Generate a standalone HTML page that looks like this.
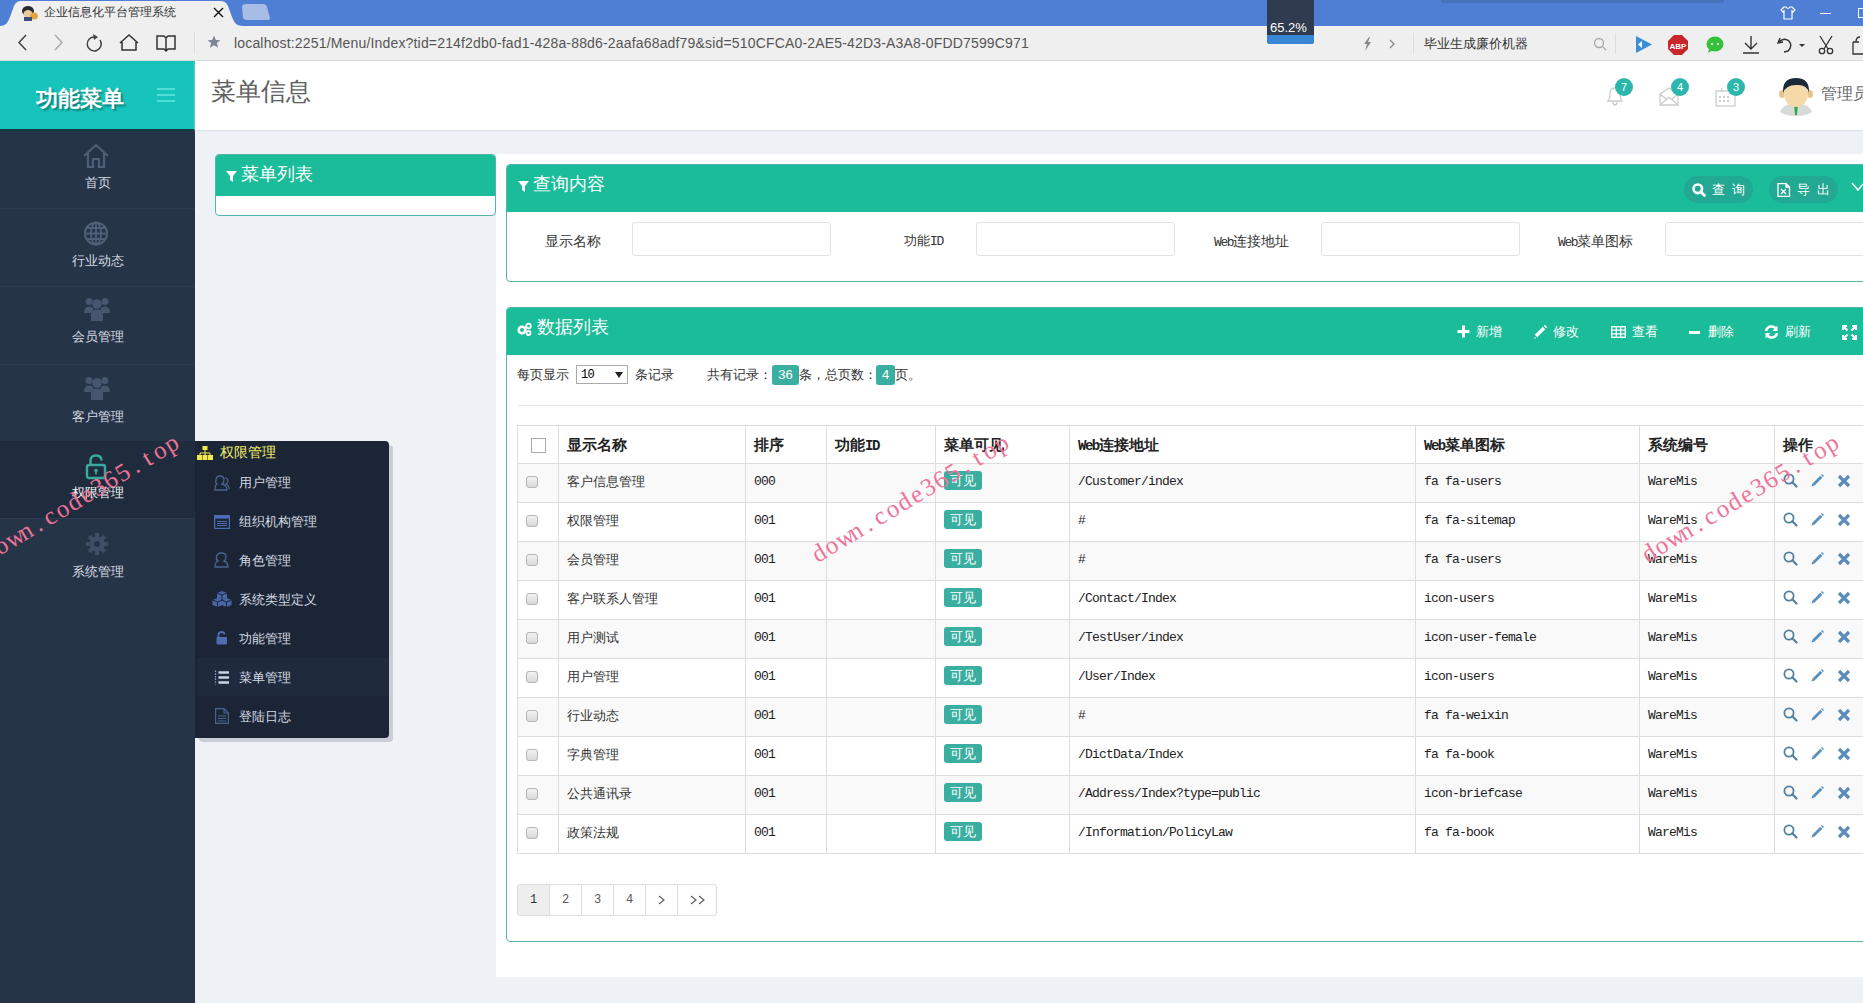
<!DOCTYPE html>
<html><head><meta charset="utf-8">
<style>
*{margin:0;padding:0;box-sizing:border-box}
html,body{width:1863px;height:1003px;overflow:hidden;background:#eef2f7;font-family:"Liberation Sans",sans-serif;position:relative}
.a{position:absolute}
/* browser chrome */
#tabbar{left:0;top:0;width:1863px;height:26px;background:#4f7fd4}
#addr{left:0;top:26px;width:1863px;height:35px;background:#efefef;border-bottom:1px solid #d9d9d9}
/* sidebar */
#side{left:0;top:61px;width:195px;height:942px;background:#253447}
#sidehead{left:0;top:0;width:195px;height:70px;background:#17c4bb;border-bottom:2px solid #0e3d47}
.si{position:absolute;left:0;width:195px;height:78px;border-bottom:1px solid #2c3c50}
.si .t{position:absolute;left:0;width:195px;text-align:center;font-size:13px;color:#d5dbe2;top:44px;line-height:16px}
.si svg{position:absolute;left:83px;top:12px}
/* header */
#head{left:195px;top:61px;width:1668px;height:69px;background:#fff;box-shadow:0 1px 2px #d8dde3}
.badge{position:absolute;width:18px;height:18px;border-radius:9px;background:#2db6ab;color:#fff;font-size:11px;line-height:18px;text-align:center}
/* panels */
.ph{position:absolute;background:#1bbc99;color:#fff}
.pb{position:absolute;border:1px solid #52b5aa;background:#fff}
.lbl{position:absolute;font-size:14px;color:#333;line-height:16px}
.inp{position:absolute;width:199px;height:34px;border:1px solid #e2e2e2;border-radius:3px;background:#fff}
.hb{position:absolute;font-size:13px;color:#fff;line-height:16px}
/* table */
table{position:absolute;left:517px;top:425px;border-collapse:collapse;font-size:13px;color:#333}
td,th{border:1px solid #ddd;height:39px;padding:0 0 0 9px;text-align:left;vertical-align:middle;white-space:nowrap}
th{font-weight:bold;font-size:15px;color:#222;height:38px}
tr.s td{background:#f9f9f9}
.m{font-family:"Liberation Mono",monospace;font-size:13px;letter-spacing:-1.2px}
.cb{display:inline-block;width:12px;height:12px;border:1px solid #aaa;border-radius:2px;background:linear-gradient(#eee,#d4d4d4);vertical-align:middle}
.vis{display:inline-block;background:#3aaea1;color:#fff;font-size:13px;line-height:18px;height:19px;padding:0 7px;border-radius:3px}
.op svg{position:absolute}
.wm{position:absolute;font-family:"Liberation Serif",serif;font-size:25px;color:#ee7399;transform-origin:0 100%;transform:rotate(-31deg);white-space:nowrap;line-height:24px}
.wm span{display:inline-block;width:14.2px;text-align:center}
.th{position:absolute;font-size:15px;font-weight:bold;color:#222;line-height:18px;white-space:nowrap}
.th .m{font-size:14px;letter-spacing:-1.5px;font-weight:bold}
.td{position:absolute;font-size:13px;color:#333;line-height:16px;white-space:nowrap}
.td.m{font-family:"Liberation Mono",monospace;letter-spacing:-0.8px;color:#222}
.cb2{position:absolute;width:12px;height:12px;border:1px solid #b5b5b5;border-radius:3px;background:linear-gradient(#f2f2f2,#d9d9d9)}
.vis2{position:absolute;width:38px;height:19px;background:#3aaea1;border-radius:3px;color:#fff;font-size:13px;line-height:19px;text-align:center}
.fl{position:absolute;font-size:13px;color:#d3d9e1;line-height:16px;white-space:nowrap}
</style></head><body>
<!-- ============ BROWSER CHROME ============ -->
<div id="tabbar" class="a"></div>
<div class="a" style="left:1441px;top:0;width:283px;height:3px;background:#4670b8;border-radius:0 0 4px 4px"></div>
<svg class="a" style="left:0;top:0" width="280" height="27">
  <path d="M0 26 C6 26 8 22 10 17 L14 6 C16 2 18 1 22 1 L219 1 C224 1 226 2 228 6 L232 17 C234 22 236 26 243 26 Z" fill="#efefef"/>
  <path d="M242 6 Q243 4 246 4 L263 4 Q266 4 267 7 L270 18 Q270 20 267 20 L247 20 Q244 20 243 18 Z" fill="#a8bde5"/>
</svg>
<!-- favicon -->
<svg class="a" style="left:21px;top:5px" width="18" height="16">
  <ellipse cx="7" cy="6" rx="6" ry="5" fill="#2a2a2a"/>
  <ellipse cx="7" cy="9" rx="4.5" ry="4" fill="#e8c9a0"/>
  <ellipse cx="13" cy="11" rx="4" ry="3.5" fill="#e3a640"/>
  <rect x="3" y="12" width="8" height="4" fill="#3d4f7a"/>
</svg>
<div class="a" style="left:44px;top:4px;font-size:12px;color:#333;line-height:17px">企业信息化平台管理系统</div>
<svg class="a" style="left:213px;top:7px" width="11" height="11"><path d="M1 1L10 10M10 1L1 10" stroke="#111" stroke-width="1.4"/></svg>
<!-- window controls -->
<svg class="a" style="left:1780px;top:6px" width="16" height="14"><path d="M4 1 L1 4 L3 6 L4 5 L4 13 L12 13 L12 5 L13 6 L15 4 L12 1 L10 1 Q8 4 6 1 Z" fill="none" stroke="#fff" stroke-width="1.2"/></svg>
<div class="a" style="left:1820px;top:13px;width:11px;height:1px;background:#fff"></div>
<div class="a" style="left:1858px;top:8px;width:8px;height:10px;border:1px solid #fff"></div>

<div id="addr" class="a"></div>
<svg class="a" style="left:14px;top:33px" width="170" height="20">
  <path d="M12 2 L5 9.5 L12 17" fill="none" stroke="#444" stroke-width="1.5"/>
  <path d="M41 2 L48 9.5 L41 17" fill="none" stroke="#aaa" stroke-width="1.5"/>
  <path d="M81 4 A7 7 0 1 0 86 7" fill="none" stroke="#444" stroke-width="1.5"/><path d="M79 1 L84 4 L80 7 Z" fill="#444"/>
  <path d="M106 10 L115 2 L124 10 M108 9 L108 17 L122 17 L122 9" fill="none" stroke="#333" stroke-width="1.5"/>
  <path d="M143 3 L150 3 L152 5 L154 3 L161 3 L161 16 L154 16 L152 18 L150 16 L143 16 Z M152 5 L152 18" fill="none" stroke="#333" stroke-width="1.5"/>
</svg>
<div class="a" style="left:194px;top:32px;width:1px;height:22px;background:#ddd"></div>
<svg class="a" style="left:207px;top:35px" width="14" height="14"><path d="M7 0.5 L8.9 5 L13.5 5.2 L9.9 8.1 L11.1 12.8 L7 10.2 L2.9 12.8 L4.1 8.1 L0.5 5.2 L5.1 5 Z" fill="#7d8699"/></svg>
<div class="a" style="left:234px;top:35px;font-size:14px;letter-spacing:0.17px;color:#555;line-height:17px">localhost:2251/Menu/Index?tid=214f2db0-fad1-428a-88d6-2aafa68adf79&amp;sid=510CFCA0-2AE5-42D3-A3A8-0FDD7599C971</div>
<!-- 65.2% popup -->
<div class="a" style="left:1267px;top:0;width:47px;height:44px;background:#2f3b4e;border-radius:0 0 3px 3px;overflow:hidden">
  <div class="a" style="left:0;top:35px;width:47px;height:9px;background:#3a86d6"></div>
  <div class="a" style="left:3px;top:21px;font-size:13px;color:#fff;line-height:14px">65.2%</div>
</div>
<!-- right of address bar -->
<svg class="a" style="left:1362px;top:36px" width="40" height="16">
  <path d="M7 1 L2 8 L5 8 L3 15 L9 6 L6 6 L8 1 Z" fill="#888"/>
  <path d="M28 4 L32 8 L28 12" fill="none" stroke="#888" stroke-width="1.3"/>
</svg>
<div class="a" style="left:1413px;top:33px;width:1px;height:21px;background:#ddd"></div>
<div class="a" style="left:1424px;top:35px;font-size:13px;color:#333;line-height:17px">毕业生成廉价机器</div>
<svg class="a" style="left:1593px;top:37px" width="14" height="14"><circle cx="6" cy="6" r="4.5" fill="none" stroke="#aaa" stroke-width="1.3"/><path d="M9.5 9.5 L13 13" stroke="#aaa" stroke-width="1.3"/></svg>
<div class="a" style="left:1615px;top:33px;width:1px;height:21px;background:#ddd"></div>
<svg class="a" style="left:1634px;top:34px" width="230" height="22">
  <path d="M2 2 L18 10.5 L2 19 Z" fill="#3a8fd8"/><path d="M8 7 L8 14 L4 10.5Z" fill="#fff"/>
  <polygon points="40,1 48,1 54,7 54,15 48,21 40,21 34,15 34,7" fill="#c8262a"/>
  <text x="44" y="14.5" font-size="8" font-weight="bold" fill="#fff" text-anchor="middle" font-family="Liberation Sans">ABP</text>
  <ellipse cx="81" cy="10" rx="8.5" ry="7.5" fill="#35c23a"/><path d="M75 15 L74 19 L79 16Z" fill="#35c23a"/>
  <circle cx="78" cy="10" r="1" fill="#fff"/><circle cx="84" cy="10" r="1" fill="#fff"/>
  <path d="M117 2 L117 15 M111 9 L117 15 L123 9 M109 19 L125 19" fill="none" stroke="#333" stroke-width="1.4"/>
  <path d="M146 4 L144 9 L149 8 M145 8 Q150 3 155 7 Q159 12 154 17 L150 18" fill="none" stroke="#333" stroke-width="1.4"/>
  <path d="M165 10 L171 10 L168 13Z" fill="#333"/>
  <path d="M186 2 L194 15 M198 2 L190 15" stroke="#333" stroke-width="1.3"/><circle cx="188" cy="17" r="2.7" fill="none" stroke="#333" stroke-width="1.3"/><circle cx="196" cy="17" r="2.7" fill="none" stroke="#333" stroke-width="1.3"/>
  <path d="M219 8 L219 20 L232 20 M219 8 L225 8 M222 8 Q222 3 226 3" fill="none" stroke="#333" stroke-width="1.3"/>
</svg>


<!-- ============ CONTENT ============ -->
<!-- left panel -->
<div class="a" style="left:215px;top:154px;width:281px;height:62px;border:1px solid #52b5aa;border-radius:4px;background:#fff;overflow:hidden">
  <div class="a" style="left:0;top:0;width:281px;height:41px;background:#1bbc99"></div>
  <svg class="a" style="left:10px;top:16px" width="11" height="11"><path d="M0 0 L11 0 L7 5 L7 11 L4 9 L4 5 Z" fill="#fff"/></svg>
  <div class="a" style="left:25px;top:8px;font-size:18px;color:#fff;line-height:22px">菜单列表</div>
</div>
<!-- right white area -->
<div class="a" style="left:496px;top:154px;width:1367px;height:823px;background:#fff"></div>
<!-- query panel -->
<div class="a" style="left:506px;top:164px;width:1370px;height:118px;border:1px solid #52b5aa;border-radius:4px;background:#fff;overflow:hidden">
  <div class="a" style="left:0;top:0;width:1370px;height:47px;background:#1bbc99"></div>
  <svg class="a" style="left:11px;top:16px" width="11" height="11"><path d="M0 0 L11 0 L7 5 L7 11 L4 9 L4 5 Z" fill="#fff"/></svg>
  <div class="a" style="left:26px;top:8px;font-size:18px;color:#fff;line-height:22px">查询内容</div>
  <div class="a" style="left:1177px;top:11px;width:69px;height:27px;border-radius:14px;background:#22a893"></div>
  <svg class="a" style="left:1185px;top:18px" width="14" height="14"><circle cx="5.8" cy="5.8" r="4.3" fill="none" stroke="#fff" stroke-width="2.6"/><path d="M8.8 8.8 L12.5 12.5" stroke="#fff" stroke-width="2.8" stroke-linecap="round"/></svg>
  <div class="a" style="left:1205px;top:17px;font-size:13px;color:#fff;line-height:16px;letter-spacing:7px">查询</div>
  <div class="a" style="left:1262px;top:11px;width:69px;height:27px;border-radius:14px;background:#22a893"></div>
  <svg class="a" style="left:1270px;top:18px" width="14" height="14"><path d="M1 0.5 L9 0.5 L12.5 4 L12.5 13.5 L1 13.5 Z M9 0.5 L9 4 L12.5 4" fill="none" stroke="#fff" stroke-width="1.3"/><path d="M4 6 L9 11 M9 6 L4 11" stroke="#fff" stroke-width="1.3"/></svg>
  <div class="a" style="left:1290px;top:17px;font-size:13px;color:#fff;line-height:16px;letter-spacing:7px">导出</div>
  <svg class="a" style="left:1344px;top:17px" width="14" height="10"><path d="M1 1 L7 8 L13 1" fill="none" stroke="#fff" stroke-width="1.5"/></svg>
  <div class="lbl" style="left:38px;top:68px">显示名称</div>
  <div class="inp" style="left:125px;top:57px"></div>
  <div class="lbl" style="left:397px;top:68px;font-size:13px">功能<span class="m" style="font-size:13px;letter-spacing:-1.4px">ID</span></div>
  <div class="inp" style="left:469px;top:57px"></div>
  <div class="lbl" style="left:707px;top:68px"><span class="m" style="font-size:13px;letter-spacing:-1.4px">Web</span>连接地址</div>
  <div class="inp" style="left:814px;top:57px"></div>
  <div class="lbl" style="left:1051px;top:68px"><span class="m" style="font-size:13px;letter-spacing:-1.4px">Web</span>菜单图标</div>
  <div class="inp" style="left:1158px;top:57px;width:220px"></div>
</div>
<!-- data panel -->
<div class="a" style="left:506px;top:307px;width:1370px;height:635px;border:1px solid #52b5aa;border-radius:4px;background:#fff;overflow:hidden">
  <div class="a" style="left:0;top:0;width:1370px;height:47px;background:#1bbc99"></div>
  <svg class="a" style="left:10px;top:14px" width="16" height="14"><circle cx="5" cy="8" r="3.3" fill="none" stroke="#fff" stroke-width="2.6"/><circle cx="11.5" cy="4" r="2.3" fill="none" stroke="#fff" stroke-width="1.8"/><circle cx="11.5" cy="11" r="2" fill="none" stroke="#fff" stroke-width="1.8"/></svg>
  <div class="a" style="left:30px;top:8px;font-size:18px;color:#fff;line-height:22px">数据列表</div>
  <svg class="a" style="left:950px;top:17px" width="13" height="13"><path d="M6.5 0.5V12.5M0.5 6.5H12.5" stroke="#fff" stroke-width="3"/></svg>
  <div class="hb" style="left:969px;top:16px">新增</div>
  <svg class="a" style="left:1026px;top:17px" width="15" height="14"><path d="M2 12 L1 14 L3 13 Z" fill="#fff"/><path d="M3 11 L11 3" stroke="#fff" stroke-width="3.4"/><path d="M12 2 L13 1" stroke="#fff" stroke-width="3.4"/></svg>
  <div class="hb" style="left:1046px;top:16px">修改</div>
  <svg class="a" style="left:1104px;top:18px" width="15" height="12"><rect x="0.7" y="0.7" width="13.6" height="10.6" fill="none" stroke="#fff" stroke-width="1.4"/><path d="M0.7 4.2H14.3M0.7 7.8H14.3M5.3 0.7V11.3M9.7 0.7V11.3" stroke="#fff" stroke-width="1.3"/></svg>
  <div class="hb" style="left:1125px;top:16px">查看</div>
  <div class="a" style="left:1182px;top:23px;width:11px;height:3px;background:#fff"></div>
  <div class="hb" style="left:1201px;top:16px">删除</div>
  <svg class="a" style="left:1257px;top:17px" width="15" height="14"><path d="M2 6 Q3 1.5 7.5 1.5 Q10.5 1.5 12 4" fill="none" stroke="#fff" stroke-width="2.6"/><path d="M13.5 0.5 L13.5 6 L8.5 6Z" fill="#fff"/><path d="M13 8 Q12 12.5 7.5 12.5 Q4.5 12.5 3 10" fill="none" stroke="#fff" stroke-width="2.6"/><path d="M1.5 13.5 L1.5 8 L6.5 8Z" fill="#fff"/></svg>
  <div class="hb" style="left:1278px;top:16px">刷新</div>
  <svg class="a" style="left:1335px;top:17px" width="15" height="15"><path d="M1 5V1H5M10 1H14V5M14 10V14H10M5 14H1V10M1 1L5.5 5.5M14 1L9.5 5.5M14 14L9.5 9.5M1 14L5.5 9.5" fill="none" stroke="#fff" stroke-width="2"/></svg>
  <!-- info row -->
  <div class="a" style="left:10px;top:59px;font-size:13px;color:#333;line-height:16px;white-space:nowrap">每页显示</div>
  <div class="a" style="left:69px;top:57px;width:52px;height:19px;border:1px solid #aaa;background:#fff;font-size:12px;line-height:17px;padding-left:4px" ><span class="m" style="font-size:12px;letter-spacing:-0.8px">10</span><svg class="a" style="left:38px;top:6px" width="8" height="6"><path d="M0 0H8L4 6Z" fill="#222"/></svg></div>
  <div class="a" style="left:128px;top:59px;font-size:13px;color:#333;line-height:16px;white-space:nowrap">条记录</div>
  <div class="a" style="left:200px;top:59px;font-size:13px;color:#333;line-height:16px;white-space:nowrap">共有记录：</div>
  <div class="a" style="left:265px;top:57px;width:27px;height:20px;background:#3aaea1;border-radius:3px;color:#fff;font-size:13px;line-height:20px;text-align:center">36</div>
  <div class="a" style="left:292px;top:59px;font-size:13px;color:#333;line-height:16px;white-space:nowrap">条，总页数：</div>
  <div class="a" style="left:369px;top:57px;width:19px;height:20px;background:#3aaea1;border-radius:3px;color:#fff;font-size:13px;line-height:20px;text-align:center">4</div>
  <div class="a" style="left:388px;top:59px;font-size:13px;color:#333;line-height:16px;white-space:nowrap">页。</div>
  <div class="a" style="left:11px;top:97px;width:1360px;height:1px;background:#e5e5e5"></div>
  <!-- pagination -->
  <div class="a" style="left:10px;top:576px;width:200px;height:32px;border:1px solid #ddd;border-radius:3px;overflow:hidden;background:#fff">
    <div class="a" style="left:0;top:0;width:32px;height:30px;background:#eee;border-right:1px solid #ddd"></div>
    <div class="a" style="left:63px;top:0;width:1px;height:30px;background:#ddd"></div>
    <div class="a" style="left:95px;top:0;width:1px;height:30px;background:#ddd"></div>
    <div class="a" style="left:127px;top:0;width:1px;height:30px;background:#ddd"></div>
    <div class="a" style="left:159px;top:0;width:1px;height:30px;background:#ddd"></div>
    <div class="a m" style="left:12px;top:7px;font-size:12px;color:#333;line-height:16px">1</div>
    <div class="a m" style="left:44px;top:7px;font-size:12px;color:#555;line-height:16px">2</div>
    <div class="a m" style="left:76px;top:7px;font-size:12px;color:#555;line-height:16px">3</div>
    <div class="a m" style="left:108px;top:7px;font-size:12px;color:#555;line-height:16px">4</div>
    <svg class="a" style="left:140px;top:10px" width="8" height="10"><path d="M1 1L6 5L1 9" fill="none" stroke="#555" stroke-width="1.1"/></svg>
    <svg class="a" style="left:172px;top:10px" width="16" height="10"><path d="M1 1L6 5L1 9M9 1L14 5L9 9" fill="none" stroke="#555" stroke-width="1.1"/></svg>
  </div>
</div>

<!-- ============ TABLE ============ -->
<div class="a" style="left:518px;top:464px;width:1345px;height:38px;background:#f9f9f9"></div>
<div class="a" style="left:518px;top:542px;width:1345px;height:38px;background:#f9f9f9"></div>
<div class="a" style="left:518px;top:620px;width:1345px;height:38px;background:#f9f9f9"></div>
<div class="a" style="left:518px;top:698px;width:1345px;height:38px;background:#f9f9f9"></div>
<div class="a" style="left:518px;top:776px;width:1345px;height:38px;background:#f9f9f9"></div>
<div class="a" style="left:517px;top:425px;width:1346px;height:1px;background:#ddd"></div>
<div class="a" style="left:517px;top:463px;width:1346px;height:1px;background:#ddd"></div>
<div class="a" style="left:517px;top:502px;width:1346px;height:1px;background:#ddd"></div>
<div class="a" style="left:517px;top:541px;width:1346px;height:1px;background:#ddd"></div>
<div class="a" style="left:517px;top:580px;width:1346px;height:1px;background:#ddd"></div>
<div class="a" style="left:517px;top:619px;width:1346px;height:1px;background:#ddd"></div>
<div class="a" style="left:517px;top:658px;width:1346px;height:1px;background:#ddd"></div>
<div class="a" style="left:517px;top:697px;width:1346px;height:1px;background:#ddd"></div>
<div class="a" style="left:517px;top:736px;width:1346px;height:1px;background:#ddd"></div>
<div class="a" style="left:517px;top:775px;width:1346px;height:1px;background:#ddd"></div>
<div class="a" style="left:517px;top:814px;width:1346px;height:1px;background:#ddd"></div>
<div class="a" style="left:517px;top:853px;width:1346px;height:1px;background:#ddd"></div>
<div class="a" style="left:517px;top:425px;width:1px;height:429px;background:#ddd"></div>
<div class="a" style="left:558px;top:425px;width:1px;height:429px;background:#ddd"></div>
<div class="a" style="left:745px;top:425px;width:1px;height:429px;background:#ddd"></div>
<div class="a" style="left:826px;top:425px;width:1px;height:429px;background:#ddd"></div>
<div class="a" style="left:935px;top:425px;width:1px;height:429px;background:#ddd"></div>
<div class="a" style="left:1069px;top:425px;width:1px;height:429px;background:#ddd"></div>
<div class="a" style="left:1415px;top:425px;width:1px;height:429px;background:#ddd"></div>
<div class="a" style="left:1639px;top:425px;width:1px;height:429px;background:#ddd"></div>
<div class="a" style="left:1774px;top:425px;width:1px;height:429px;background:#ddd"></div>
<div class="a" style="left:531px;top:438px;width:15px;height:15px;border:1px solid #aaa;background:#fff"></div>
<div class="th" style="left:567px;top:436px">显示名称</div>
<div class="th" style="left:754px;top:436px">排序</div>
<div class="th" style="left:835px;top:436px">功能<span class="m">ID</span></div>
<div class="th" style="left:944px;top:436px">菜单可见</div>
<div class="th" style="left:1078px;top:436px"><span class="m">Web</span>连接地址</div>
<div class="th" style="left:1424px;top:436px"><span class="m">Web</span>菜单图标</div>
<div class="th" style="left:1648px;top:436px">系统编号</div>
<div class="th" style="left:1783px;top:436px">操作</div>
<div class="cb2" style="left:526px;top:476px"></div>
<div class="td" style="left:567px;top:474px">客户信息管理</div>
<div class="td m" style="left:754px;top:474px">000</div>
<div class="vis2" style="left:944px;top:471px">可见</div>
<div class="td m" style="left:1078px;top:474px">/Customer/index</div>
<div class="td m" style="left:1424px;top:474px">fa fa-users</div>
<div class="td m" style="left:1648px;top:474px">WareMis</div>
<svg class="a" style="left:1783px;top:473px" width="15" height="15"><circle cx="6" cy="6" r="4.6" fill="none" stroke="#52809e" stroke-width="1.8"/><path d="M9.3 9.3 L13.5 13.5" stroke="#52809e" stroke-width="2.2" stroke-linecap="round"/></svg>
<svg class="a" style="left:1810px;top:473px" width="15" height="15"><path d="M1.5 13.5 L2.3 10.7 L4.3 12.7Z" fill="#5a8fbd"/><path d="M3.3 11.7 L11.3 3.7" stroke="#5a8fbd" stroke-width="2.8"/><path d="M12 3 L13 2" stroke="#5a8fbd" stroke-width="2.8"/></svg>
<svg class="a" style="left:1837px;top:474px" width="14" height="14"><path d="M2 2 L12 12 M12 2 L2 12" stroke="#5b8db8" stroke-width="3.2"/></svg>
<div class="cb2" style="left:526px;top:515px"></div>
<div class="td" style="left:567px;top:513px">权限管理</div>
<div class="td m" style="left:754px;top:513px">001</div>
<div class="vis2" style="left:944px;top:510px">可见</div>
<div class="td m" style="left:1078px;top:513px">#</div>
<div class="td m" style="left:1424px;top:513px">fa fa-sitemap</div>
<div class="td m" style="left:1648px;top:513px">WareMis</div>
<svg class="a" style="left:1783px;top:512px" width="15" height="15"><circle cx="6" cy="6" r="4.6" fill="none" stroke="#52809e" stroke-width="1.8"/><path d="M9.3 9.3 L13.5 13.5" stroke="#52809e" stroke-width="2.2" stroke-linecap="round"/></svg>
<svg class="a" style="left:1810px;top:512px" width="15" height="15"><path d="M1.5 13.5 L2.3 10.7 L4.3 12.7Z" fill="#5a8fbd"/><path d="M3.3 11.7 L11.3 3.7" stroke="#5a8fbd" stroke-width="2.8"/><path d="M12 3 L13 2" stroke="#5a8fbd" stroke-width="2.8"/></svg>
<svg class="a" style="left:1837px;top:513px" width="14" height="14"><path d="M2 2 L12 12 M12 2 L2 12" stroke="#5b8db8" stroke-width="3.2"/></svg>
<div class="cb2" style="left:526px;top:554px"></div>
<div class="td" style="left:567px;top:552px">会员管理</div>
<div class="td m" style="left:754px;top:552px">001</div>
<div class="vis2" style="left:944px;top:549px">可见</div>
<div class="td m" style="left:1078px;top:552px">#</div>
<div class="td m" style="left:1424px;top:552px">fa fa-users</div>
<div class="td m" style="left:1648px;top:552px">WareMis</div>
<svg class="a" style="left:1783px;top:551px" width="15" height="15"><circle cx="6" cy="6" r="4.6" fill="none" stroke="#52809e" stroke-width="1.8"/><path d="M9.3 9.3 L13.5 13.5" stroke="#52809e" stroke-width="2.2" stroke-linecap="round"/></svg>
<svg class="a" style="left:1810px;top:551px" width="15" height="15"><path d="M1.5 13.5 L2.3 10.7 L4.3 12.7Z" fill="#5a8fbd"/><path d="M3.3 11.7 L11.3 3.7" stroke="#5a8fbd" stroke-width="2.8"/><path d="M12 3 L13 2" stroke="#5a8fbd" stroke-width="2.8"/></svg>
<svg class="a" style="left:1837px;top:552px" width="14" height="14"><path d="M2 2 L12 12 M12 2 L2 12" stroke="#5b8db8" stroke-width="3.2"/></svg>
<div class="cb2" style="left:526px;top:593px"></div>
<div class="td" style="left:567px;top:591px">客户联系人管理</div>
<div class="td m" style="left:754px;top:591px">001</div>
<div class="vis2" style="left:944px;top:588px">可见</div>
<div class="td m" style="left:1078px;top:591px">/Contact/Index</div>
<div class="td m" style="left:1424px;top:591px">icon-users</div>
<div class="td m" style="left:1648px;top:591px">WareMis</div>
<svg class="a" style="left:1783px;top:590px" width="15" height="15"><circle cx="6" cy="6" r="4.6" fill="none" stroke="#52809e" stroke-width="1.8"/><path d="M9.3 9.3 L13.5 13.5" stroke="#52809e" stroke-width="2.2" stroke-linecap="round"/></svg>
<svg class="a" style="left:1810px;top:590px" width="15" height="15"><path d="M1.5 13.5 L2.3 10.7 L4.3 12.7Z" fill="#5a8fbd"/><path d="M3.3 11.7 L11.3 3.7" stroke="#5a8fbd" stroke-width="2.8"/><path d="M12 3 L13 2" stroke="#5a8fbd" stroke-width="2.8"/></svg>
<svg class="a" style="left:1837px;top:591px" width="14" height="14"><path d="M2 2 L12 12 M12 2 L2 12" stroke="#5b8db8" stroke-width="3.2"/></svg>
<div class="cb2" style="left:526px;top:632px"></div>
<div class="td" style="left:567px;top:630px">用户测试</div>
<div class="td m" style="left:754px;top:630px">001</div>
<div class="vis2" style="left:944px;top:627px">可见</div>
<div class="td m" style="left:1078px;top:630px">/TestUser/index</div>
<div class="td m" style="left:1424px;top:630px">icon-user-female</div>
<div class="td m" style="left:1648px;top:630px">WareMis</div>
<svg class="a" style="left:1783px;top:629px" width="15" height="15"><circle cx="6" cy="6" r="4.6" fill="none" stroke="#52809e" stroke-width="1.8"/><path d="M9.3 9.3 L13.5 13.5" stroke="#52809e" stroke-width="2.2" stroke-linecap="round"/></svg>
<svg class="a" style="left:1810px;top:629px" width="15" height="15"><path d="M1.5 13.5 L2.3 10.7 L4.3 12.7Z" fill="#5a8fbd"/><path d="M3.3 11.7 L11.3 3.7" stroke="#5a8fbd" stroke-width="2.8"/><path d="M12 3 L13 2" stroke="#5a8fbd" stroke-width="2.8"/></svg>
<svg class="a" style="left:1837px;top:630px" width="14" height="14"><path d="M2 2 L12 12 M12 2 L2 12" stroke="#5b8db8" stroke-width="3.2"/></svg>
<div class="cb2" style="left:526px;top:671px"></div>
<div class="td" style="left:567px;top:669px">用户管理</div>
<div class="td m" style="left:754px;top:669px">001</div>
<div class="vis2" style="left:944px;top:666px">可见</div>
<div class="td m" style="left:1078px;top:669px">/User/Index</div>
<div class="td m" style="left:1424px;top:669px">icon-users</div>
<div class="td m" style="left:1648px;top:669px">WareMis</div>
<svg class="a" style="left:1783px;top:668px" width="15" height="15"><circle cx="6" cy="6" r="4.6" fill="none" stroke="#52809e" stroke-width="1.8"/><path d="M9.3 9.3 L13.5 13.5" stroke="#52809e" stroke-width="2.2" stroke-linecap="round"/></svg>
<svg class="a" style="left:1810px;top:668px" width="15" height="15"><path d="M1.5 13.5 L2.3 10.7 L4.3 12.7Z" fill="#5a8fbd"/><path d="M3.3 11.7 L11.3 3.7" stroke="#5a8fbd" stroke-width="2.8"/><path d="M12 3 L13 2" stroke="#5a8fbd" stroke-width="2.8"/></svg>
<svg class="a" style="left:1837px;top:669px" width="14" height="14"><path d="M2 2 L12 12 M12 2 L2 12" stroke="#5b8db8" stroke-width="3.2"/></svg>
<div class="cb2" style="left:526px;top:710px"></div>
<div class="td" style="left:567px;top:708px">行业动态</div>
<div class="td m" style="left:754px;top:708px">001</div>
<div class="vis2" style="left:944px;top:705px">可见</div>
<div class="td m" style="left:1078px;top:708px">#</div>
<div class="td m" style="left:1424px;top:708px">fa fa-weixin</div>
<div class="td m" style="left:1648px;top:708px">WareMis</div>
<svg class="a" style="left:1783px;top:707px" width="15" height="15"><circle cx="6" cy="6" r="4.6" fill="none" stroke="#52809e" stroke-width="1.8"/><path d="M9.3 9.3 L13.5 13.5" stroke="#52809e" stroke-width="2.2" stroke-linecap="round"/></svg>
<svg class="a" style="left:1810px;top:707px" width="15" height="15"><path d="M1.5 13.5 L2.3 10.7 L4.3 12.7Z" fill="#5a8fbd"/><path d="M3.3 11.7 L11.3 3.7" stroke="#5a8fbd" stroke-width="2.8"/><path d="M12 3 L13 2" stroke="#5a8fbd" stroke-width="2.8"/></svg>
<svg class="a" style="left:1837px;top:708px" width="14" height="14"><path d="M2 2 L12 12 M12 2 L2 12" stroke="#5b8db8" stroke-width="3.2"/></svg>
<div class="cb2" style="left:526px;top:749px"></div>
<div class="td" style="left:567px;top:747px">字典管理</div>
<div class="td m" style="left:754px;top:747px">001</div>
<div class="vis2" style="left:944px;top:744px">可见</div>
<div class="td m" style="left:1078px;top:747px">/DictData/Index</div>
<div class="td m" style="left:1424px;top:747px">fa fa-book</div>
<div class="td m" style="left:1648px;top:747px">WareMis</div>
<svg class="a" style="left:1783px;top:746px" width="15" height="15"><circle cx="6" cy="6" r="4.6" fill="none" stroke="#52809e" stroke-width="1.8"/><path d="M9.3 9.3 L13.5 13.5" stroke="#52809e" stroke-width="2.2" stroke-linecap="round"/></svg>
<svg class="a" style="left:1810px;top:746px" width="15" height="15"><path d="M1.5 13.5 L2.3 10.7 L4.3 12.7Z" fill="#5a8fbd"/><path d="M3.3 11.7 L11.3 3.7" stroke="#5a8fbd" stroke-width="2.8"/><path d="M12 3 L13 2" stroke="#5a8fbd" stroke-width="2.8"/></svg>
<svg class="a" style="left:1837px;top:747px" width="14" height="14"><path d="M2 2 L12 12 M12 2 L2 12" stroke="#5b8db8" stroke-width="3.2"/></svg>
<div class="cb2" style="left:526px;top:788px"></div>
<div class="td" style="left:567px;top:786px">公共通讯录</div>
<div class="td m" style="left:754px;top:786px">001</div>
<div class="vis2" style="left:944px;top:783px">可见</div>
<div class="td m" style="left:1078px;top:786px">/Address/Index?type=public</div>
<div class="td m" style="left:1424px;top:786px">icon-briefcase</div>
<div class="td m" style="left:1648px;top:786px">WareMis</div>
<svg class="a" style="left:1783px;top:785px" width="15" height="15"><circle cx="6" cy="6" r="4.6" fill="none" stroke="#52809e" stroke-width="1.8"/><path d="M9.3 9.3 L13.5 13.5" stroke="#52809e" stroke-width="2.2" stroke-linecap="round"/></svg>
<svg class="a" style="left:1810px;top:785px" width="15" height="15"><path d="M1.5 13.5 L2.3 10.7 L4.3 12.7Z" fill="#5a8fbd"/><path d="M3.3 11.7 L11.3 3.7" stroke="#5a8fbd" stroke-width="2.8"/><path d="M12 3 L13 2" stroke="#5a8fbd" stroke-width="2.8"/></svg>
<svg class="a" style="left:1837px;top:786px" width="14" height="14"><path d="M2 2 L12 12 M12 2 L2 12" stroke="#5b8db8" stroke-width="3.2"/></svg>
<div class="cb2" style="left:526px;top:827px"></div>
<div class="td" style="left:567px;top:825px">政策法规</div>
<div class="td m" style="left:754px;top:825px">001</div>
<div class="vis2" style="left:944px;top:822px">可见</div>
<div class="td m" style="left:1078px;top:825px">/Information/PolicyLaw</div>
<div class="td m" style="left:1424px;top:825px">fa fa-book</div>
<div class="td m" style="left:1648px;top:825px">WareMis</div>
<svg class="a" style="left:1783px;top:824px" width="15" height="15"><circle cx="6" cy="6" r="4.6" fill="none" stroke="#52809e" stroke-width="1.8"/><path d="M9.3 9.3 L13.5 13.5" stroke="#52809e" stroke-width="2.2" stroke-linecap="round"/></svg>
<svg class="a" style="left:1810px;top:824px" width="15" height="15"><path d="M1.5 13.5 L2.3 10.7 L4.3 12.7Z" fill="#5a8fbd"/><path d="M3.3 11.7 L11.3 3.7" stroke="#5a8fbd" stroke-width="2.8"/><path d="M12 3 L13 2" stroke="#5a8fbd" stroke-width="2.8"/></svg>
<svg class="a" style="left:1837px;top:825px" width="14" height="14"><path d="M2 2 L12 12 M12 2 L2 12" stroke="#5b8db8" stroke-width="3.2"/></svg>
<!-- ============ SIDEBAR ============ -->
<div id="side" class="a">
  <div id="sidehead" class="a">
    <div class="a" style="left:36px;top:24px;font-size:22px;font-weight:bold;color:#fff;line-height:28px;text-shadow:2px 2px 2px rgba(0,0,0,0.35)">功能菜单</div>
    <svg class="a" style="left:157px;top:27px" width="18" height="14"><path d="M0 1H18M0 7H18M0 13H18" stroke="#8ef5f2" stroke-width="1"/></svg>
  </div>
  <div class="si" style="top:70px">
    <svg width="28" height="26" style="left:82px;top:12px"><path d="M2 13 L14 2 L26 13 M6 10 L6 24 L11 24 L11 16 L17 16 L17 24 L22 24 L22 10" fill="none" stroke="#4e5f78" stroke-width="2.2"/></svg>
    <div class="t" style="top:44px">首页</div>
  </div>
  <div class="si" style="top:148px">
    <svg width="28" height="26" style="left:83px;top:12px"><circle cx="13" cy="12.5" r="11" fill="none" stroke="#4e5f78" stroke-width="2"/><ellipse cx="13" cy="12.5" rx="5" ry="11" fill="none" stroke="#4e5f78" stroke-width="1.8"/><path d="M2 12.5H24M4 7H22M4 18H22M13 1.5V23.5" stroke="#4e5f78" stroke-width="1.8"/></svg>
    <div class="t">行业动态</div>
  </div>
  <div class="si" style="top:226px">
    <svg width="28" height="26" style="left:84px;top:10px"><g fill="#45566e"><circle cx="5" cy="4.5" r="3.5"/><circle cx="21" cy="4.5" r="3.5"/><circle cx="13" cy="7" r="4.8"/><path d="M0 16 Q0 9.5 5 9.5 Q8 9.5 9 11 L9 16Z M26 16 Q26 9.5 21 9.5 Q18 9.5 17 11 L17 16Z"/><path d="M7 24 L7 17 Q7 12.5 13 12.5 Q19 12.5 19 17 L19 24Z"/></g></svg>
    <div class="t" style="top:42px">会员管理</div>
  </div>
  <div class="si" style="top:304px">
    <svg width="28" height="26" style="left:84px;top:11px"><g fill="#45566e"><circle cx="5" cy="4.5" r="3.5"/><circle cx="21" cy="4.5" r="3.5"/><circle cx="13" cy="7" r="4.8"/><path d="M0 16 Q0 9.5 5 9.5 Q8 9.5 9 11 L9 16Z M26 16 Q26 9.5 21 9.5 Q18 9.5 17 11 L17 16Z"/><path d="M7 24 L7 17 Q7 12.5 13 12.5 Q19 12.5 19 17 L19 24Z"/></g></svg>
    <div class="t">客户管理</div>
  </div>
  <div class="si" style="top:380px;height:78px;background:#1f2c3d">
    <svg width="24" height="26" style="left:85px;top:13px"><path d="M5.5 11 L5.5 7 Q5.5 1.5 11 1.5 Q16.5 1.5 16.5 6.5" fill="none" stroke="#3aa9a0" stroke-width="2.4"/><rect x="2" y="11" width="18" height="13" rx="2" fill="none" stroke="#3aa9a0" stroke-width="2.4"/><circle cx="11" cy="16.5" r="1.8" fill="#3aa9a0"/><rect x="10.2" y="17" width="1.6" height="3.5" fill="#3aa9a0"/></svg>
    <div class="t" style="color:#eef1f4">权限管理</div>
  </div>
  <div class="si" style="top:458px;border-bottom:none">
    <svg width="24" height="24" style="left:86px;top:14px"><g transform="translate(11 11)"><circle r="7.5" fill="#3f4f66"/><g fill="#3f4f66"><rect x="-2" y="-11" width="4" height="6"/><rect x="-2" y="5" width="4" height="6"/><rect x="-11" y="-2" width="6" height="4"/><rect x="5" y="-2" width="6" height="4"/><rect x="-2" y="-11" width="4" height="6" transform="rotate(45)"/><rect x="-2" y="5" width="4" height="6" transform="rotate(45)"/><rect x="-11" y="-2" width="6" height="4" transform="rotate(45)"/><rect x="5" y="-2" width="6" height="4" transform="rotate(45)"/></g><circle r="3" fill="#253447"/></g></svg>
    <div class="t" style="top:45px">系统管理</div>
  </div>

</div>
<div id="head" class="a">
  <div class="a" style="left:16px;top:14px;font-size:25px;color:#606060;line-height:32px">菜单信息</div>
  <svg class="a" style="left:1410px;top:24px" width="20" height="22"><path d="M3 16 Q5 14 5 9 Q5 3 10 3 Q15 3 15 9 Q15 14 17 16 Z M8 17 Q8 20 10 20 Q12 20 12 17" fill="none" stroke="#ccc" stroke-width="1.3"/></svg>
  <div class="badge" style="left:1420px;top:17px">7</div>
  <svg class="a" style="left:1464px;top:25px" width="22" height="20"><path d="M1 8 L10 2 L19 8 L19 19 L1 19 Z M1 19 L10 11 L19 19 M1 8 L7 13 M19 8 L13 13" fill="none" stroke="#ccc" stroke-width="1.3"/></svg>
  <div class="badge" style="left:1476px;top:17px">4</div>
  <svg class="a" style="left:1520px;top:26px" width="22" height="20"><rect x="1" y="4" width="19" height="15" fill="none" stroke="#ccc" stroke-width="1.3"/><g fill="#ccc"><rect x="4" y="9" width="2" height="2"/><rect x="8" y="9" width="2" height="2"/><rect x="12" y="9" width="2" height="2"/><rect x="4" y="13" width="2" height="2"/><rect x="8" y="13" width="2" height="2"/><rect x="12" y="13" width="2" height="2"/><rect x="6" y="1" width="1.3" height="4"/></g></svg>
  <div class="badge" style="left:1532px;top:17px">3</div>
  <svg class="a" style="left:1582px;top:15px" width="38" height="40">
    <path d="M3 36 Q6 29 13 28 L25 28 Q32 29 35 36 Q30 40 19 40 Q8 40 3 36Z" fill="#d8dcd8"/>
    <path d="M17 28 L21 28 L20 39 L18 39Z" fill="#2fa84a"/>
    <ellipse cx="5" cy="18" rx="3" ry="4" fill="#e9c38f"/><ellipse cx="33" cy="18" rx="3" ry="4" fill="#e9c38f"/>
    <ellipse cx="19" cy="18" rx="12" ry="13" fill="#f5d9a8"/>
    <path d="M6 17 Q5 2 19 2 Q33 2 32 17 Q30 8 19 9 Q9 9 6 17Z" fill="#1d2a3a"/>
  </svg>
  <div class="a" style="left:1626px;top:23px;font-size:16px;color:#666;line-height:20px;white-space:nowrap">管理员</div>
</div>

<!-- ============ FLYOUT ============ -->
<div class="a" style="left:199px;top:445px;width:194px;height:297px;background:#c9ced6;border-radius:4px"></div>
<div class="a" style="left:195px;top:441px;width:194px;height:297px;background:#1c2536;border-radius:0 4px 4px 0">
  <div class="a" style="left:2px;top:217px;width:192px;height:38px;background:#1f2b3d"></div>
  <svg class="a" style="left:2px;top:5px" width="16" height="14"><rect x="5.5" y="0" width="5" height="4" fill="#f2ea4a"/><path d="M8 4V7M3 7H13M3 7V9M8 7V9M13 7V9" stroke="#f2ea4a" stroke-width="1"/><rect x="0" y="9" width="5" height="5" fill="#f2ea4a"/><rect x="5.5" y="9" width="5" height="5" fill="#f2ea4a"/><rect x="11" y="9" width="5" height="5" fill="#f2ea4a"/></svg>
  <div class="fl" style="left:25px;top:3px;color:#f4f06a;font-size:14px;line-height:17px">权限管理</div>
  <svg class="a" style="left:19px;top:34px" width="16" height="16"><path d="M3 9 Q1 8 2 5 Q2 1 6 1 Q10 1 10 5 Q10 8 8 9 Q13 10 13 15 L1 15 Q1 10 3 9Z" fill="none" stroke="#4b638f" stroke-width="1.3"/><path d="M11 3 Q14 3 14 6 Q14 8 12 9 Q15 10 15 14" fill="none" stroke="#4b638f" stroke-width="1.2"/></svg>
  <div class="fl" style="left:44px;top:34px">用户管理</div>
  <svg class="a" style="left:19px;top:74px" width="16" height="14"><rect x="0.6" y="0.6" width="14.8" height="12.8" fill="none" stroke="#4f6db0" stroke-width="1.2"/><rect x="0.6" y="0.6" width="14.8" height="3" fill="#4f6db0"/><path d="M3 6.5H13M3 8.5H13M3 10.5H13" stroke="#4f6db0" stroke-width="1"/></svg>
  <div class="fl" style="left:44px;top:73px">组织机构管理</div>
  <svg class="a" style="left:19px;top:111px" width="16" height="16"><path d="M4 9 Q2 8 2.5 5 Q3 1 7.5 1 Q12 1 12 5 Q12 8 10 9 Q14 10 14 15 L1 15 Q1 10 4 9Z" fill="none" stroke="#4b638f" stroke-width="1.3"/></svg>
  <div class="fl" style="left:44px;top:112px">角色管理</div>
  <svg class="a" style="left:17px;top:150px" width="20" height="16"><g fill="#4a66a6"><path d="M10 0 L15 2 L15 7 L10 9 L5 7 L5 2Z"/><path d="M5.5 7 L10.5 9 L10.5 14 L5.5 16 L0.5 14 L0.5 9Z"/><path d="M14.5 7 L19.5 9 L19.5 14 L14.5 16 L9.5 14 L9.5 9Z"/></g><path d="M5 2 L10 4 L15 2 M10 4V9 M0.5 9 L5.5 11 L10.5 9 M5.5 11V16 M9.5 9 L14.5 11 L19.5 9 M14.5 11V16" stroke="#1c2536" stroke-width="1" fill="none"/></svg>
  <div class="fl" style="left:44px;top:151px">系统类型定义</div>
  <svg class="a" style="left:21px;top:190px" width="12" height="14"><path d="M2.5 6 L2.5 4 Q2.5 1 5.5 1 Q8.5 1 8.5 3.5" fill="none" stroke="#4f6db0" stroke-width="1.8"/><rect x="0.5" y="6" width="10.5" height="7.5" rx="1" fill="#4f6db0"/></svg>
  <div class="fl" style="left:44px;top:190px">功能管理</div>
  <svg class="a" style="left:19px;top:229px" width="16" height="15"><path d="M1.5 0.5V14.5" stroke="#8ea3c9" stroke-width="1.2" stroke-dasharray="1.5 1.2"/><path d="M4.5 2.5H15M4.5 7.5H15M4.5 12.5H15" stroke="#c9d3e3" stroke-width="2.4"/></svg>
  <div class="fl" style="left:44px;top:229px">菜单管理</div>
  <svg class="a" style="left:20px;top:267px" width="14" height="16"><path d="M0.6 0.6 L9 0.6 L13.4 5 L13.4 15.4 L0.6 15.4Z M9 0.6 V5 H13.4" fill="none" stroke="#4b638f" stroke-width="1.2"/><path d="M3 8H11M3 10.5H11M3 13H11" stroke="#4b638f" stroke-width="1"/></svg>
  <div class="fl" style="left:44px;top:268px">登陆日志</div>
</div>
<!-- ============ WATERMARKS ============ -->
<div class="wm" style="left:-11px;top:543px"><span>d</span><span>o</span><span>w</span><span>n</span><span>.</span><span>c</span><span>o</span><span>d</span><span>e</span><span>3</span><span>6</span><span>5</span><span>.</span><span>t</span><span>o</span><span>p</span></div>
<div class="wm" style="left:819px;top:543px"><span>d</span><span>o</span><span>w</span><span>n</span><span>.</span><span>c</span><span>o</span><span>d</span><span>e</span><span>3</span><span>6</span><span>5</span><span>.</span><span>t</span><span>o</span><span>p</span></div>
<div class="wm" style="left:1649px;top:543px"><span>d</span><span>o</span><span>w</span><span>n</span><span>.</span><span>c</span><span>o</span><span>d</span><span>e</span><span>3</span><span>6</span><span>5</span><span>.</span><span>t</span><span>o</span><span>p</span></div>
</body></html>
